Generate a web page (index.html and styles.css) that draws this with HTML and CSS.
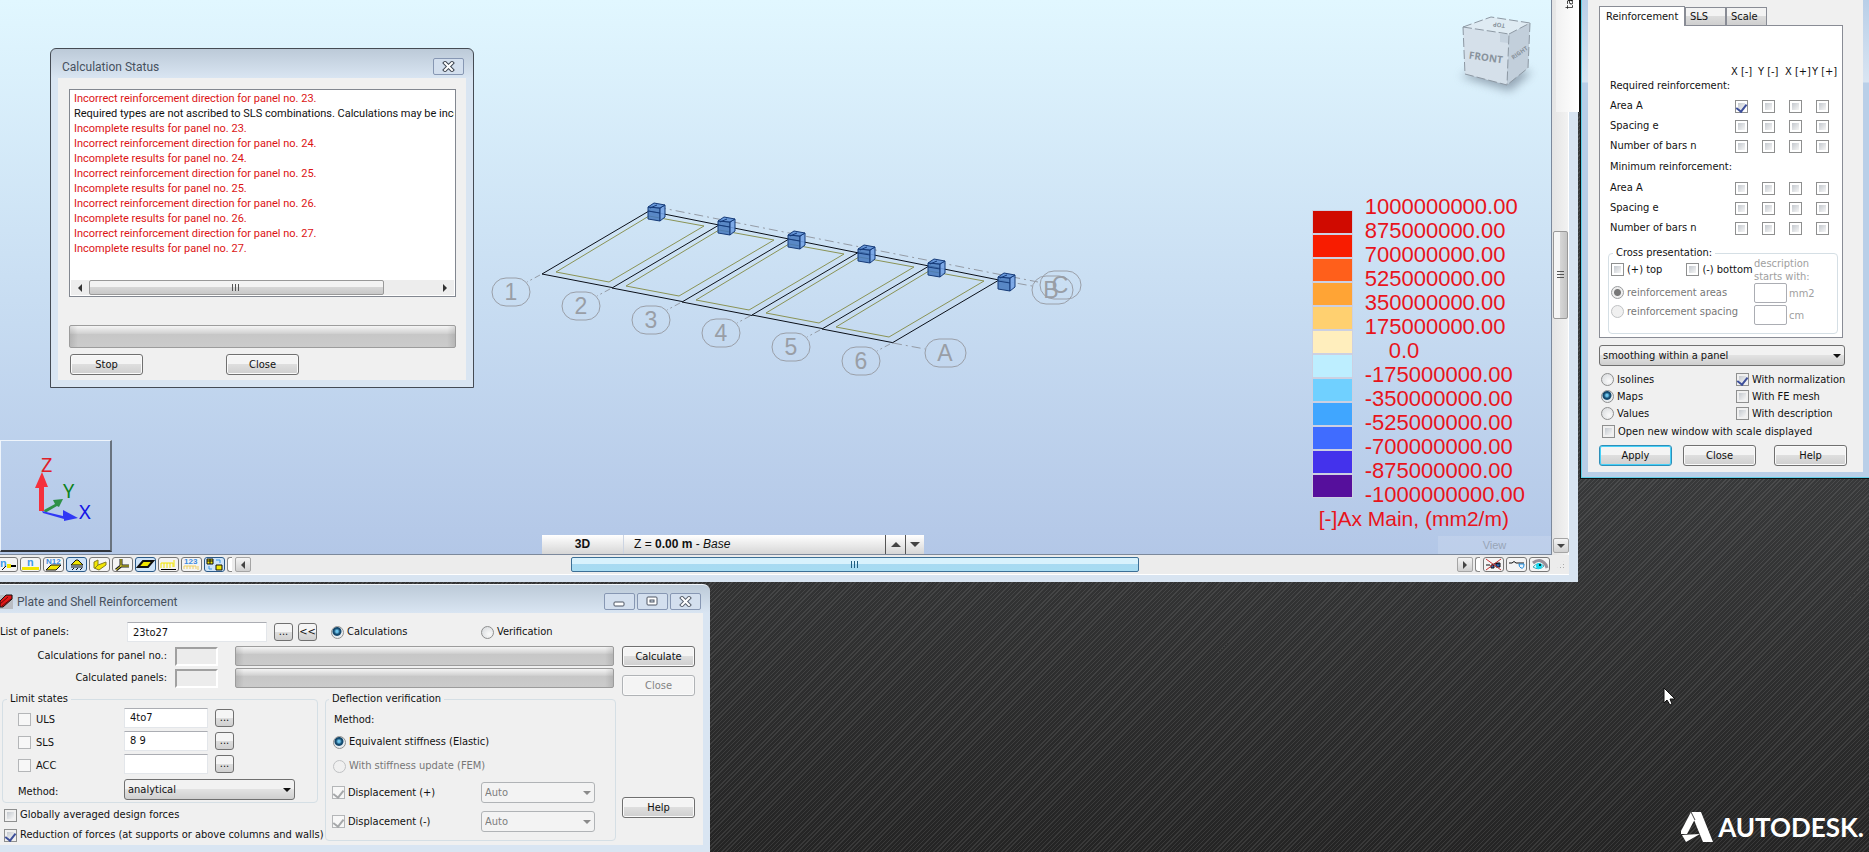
FILE: index.html
```html
<!DOCTYPE html>
<html lang="en">
<head>
<meta charset="utf-8">
<title>Plate and Shell Reinforcement</title>
<link rel="stylesheet" href="styles.css">
</head>
<body>
<main class="desktop">

<section class="viewer" aria-label="3D view">
  <div class="canvas">
    <svg class="scene" width="620" height="220" viewBox="480 180 620 220" aria-label="Model">
      <defs>
        <g id="panel">
          <path d="M542 274L649 211L719 225" fill="none" stroke="#0a0f18"/>
          <path d="M542 274L612 287.500" fill="none" stroke="#0a0f18"/>
          <path d="M556 272L649 216L704 226L609 282Z" fill="none" stroke="#8a9355"/>
          <path d="M540 275L527 282" stroke="#949ba5" stroke-dasharray="6 3 2 3"/>
        </g>
        <g id="cube" stroke="#153a78" stroke-width="1">
          <path d="M648 207L660 208L660 221L648 219Z" fill="#4478bd" fill-opacity=".85"/>
          <path d="M660 208L665 205L665 217L660 221Z" fill="#74a3e6" fill-opacity=".9"/>
          <path d="M648 207L654 203L665 205L660 208Z" fill="#5c8fd6" fill-opacity=".9"/>
          <path d="M648 211L660 213M650 208L657 205" fill="none"/>
        </g>
      </defs>
      <path d="M657 207L1038 282M999 280L1032 286M893 343L925 349" stroke="#949ba5" stroke-dasharray="9 4 2 4" fill="none"/>
      <use href="#panel"/><use href="#panel" x="70" y="14"/><use href="#panel" x="140" y="28"/><use href="#panel" x="210" y="41"/><use href="#panel" x="280" y="55"/>
      <path d="M892 343L999 280" stroke="#0a0f18"/>
      <path d="M890 344L877 351" stroke="#949ba5" stroke-dasharray="6 3 2 3"/>
      <use href="#cube"/><use href="#cube" x="70" y="14"/><use href="#cube" x="140" y="28"/><use href="#cube" x="210" y="42"/><use href="#cube" x="280" y="56"/><use href="#cube" x="350" y="70"/>
      <g fill="none" stroke="#9a9fa8">
        <rect x="492" y="278" width="38" height="28" rx="14"/><rect x="562" y="292" width="38" height="28" rx="14"/><rect x="632" y="306" width="38" height="28" rx="14"/><rect x="702" y="319" width="38" height="28" rx="14"/><rect x="772" y="333" width="38" height="28" rx="14"/><rect x="842" y="347" width="38" height="28" rx="14"/>
        <rect x="925" y="339" width="41" height="28" rx="14"/><rect x="1032" y="276" width="41" height="28" rx="14"/><rect x="1040" y="271" width="41" height="28" rx="14"/>
      </g>
      <g class="axis-name">
        <text x="511" y="300">1</text><text x="581" y="314">2</text><text x="651" y="328">3</text><text x="721" y="341">4</text><text x="791" y="355">5</text><text x="861" y="369">6</text>
        <text x="945" y="361">A</text><text x="1051" y="298">B</text><text x="1060" y="293">C</text>
      </g>
    </svg>

    <svg class="viewcube" width="90" height="90" viewBox="1450 10 90 90" aria-label="View cube">
      <defs><filter id="soft" x="-30%" y="-80%" width="160%" height="260%"><feGaussianBlur stdDeviation="5"/></filter></defs>
      <path d="M1460 76L1490 66L1532 72L1510 91Z" fill="#6f7f90" opacity=".65" filter="url(#soft)"/>
      <path d="M1463 27L1509 34L1507 85L1465 74Z" fill="#d5e0ea"/>
      <path d="M1509 34L1530 23L1528 68L1507 85Z" fill="#c2cfdb"/>
      <path d="M1463 27L1491 17L1530 23L1509 34Z" fill="#dfebf3"/>
      <path d="M1500 34h8v9l-8-1z" fill="#c6d3df"/>
      <path d="M1463 27L1509 34L1507 85L1465 74ZM1463 27L1491 17L1530 23L1509 34M1530 23L1528 68L1507 85" fill="none" stroke="#8d98a3" stroke-dasharray="9 3"/>
      <text class="cube-front" x="1486" y="61" transform="rotate(8 1486 57)">FRONT</text>
      <text class="cube-side" x="1519" y="55" transform="rotate(-35 1519 52)">RIGHT</text>
      <text class="cube-top" x="1499" y="27" transform="rotate(188 1499 25)">TOP</text>
    </svg>

    <div class="legend">
      <ol class="swatches">
        <li class="c1"></li><li class="c2"></li><li class="c3"></li><li class="c4"></li><li class="c5"></li><li class="c6"></li><li class="c7"></li><li class="c8"></li><li class="c9"></li><li class="c10"></li><li class="c11"></li><li class="c12"></li>
      </ol>
      <ol class="values">
        <li>1000000000.00</li><li>875000000.00</li><li>700000000.00</li><li>525000000.00</li><li>350000000.00</li><li>175000000.00</li><li class="zero">0.0</li><li>-175000000.00</li><li>-350000000.00</li><li>-525000000.00</li><li>-700000000.00</li><li>-875000000.00</li><li>-1000000000.00</li>
      </ol>
      <p class="caption">[-]Ax Main, (mm2/m)</p>
    </div>

    <div class="axes">
      <svg width="109" height="109" viewBox="0 0 109 109" aria-label="Axes">
        <path d="M43 69L54 63L52 59L62 58L58 66L56 65L44 72Z" fill="#2f9148"/>
        <path d="M41 70L62 75L62 69L77 77L63 80L63 78L42 72Z" fill="#3038f5"/>
        <path d="M38 70V47H34L41 31L47 46H43V70Z" fill="#f5303c"/>
        <g class="axes-name"><text x="40" y="31" fill="#e02028">Z</text><text x="62" y="57" fill="#0c8220">Y</text><text x="78" y="78" fill="#1414e6">X</text></g>
      </svg>
    </div>

    <div class="level">
      <span class="mode">3D</span>
      <span class="height">Z = <b>0.00 m</b> - <i>Base</i></span>
      <button class="step up" aria-label="Level up"></button>
      <button class="step down" aria-label="Level down"></button>
    </div>
    <span class="view-tag">View</span>
  </div>

  <div class="vscroll"><span class="vthumb"></span><button class="arrow adown" aria-label="Scroll down"></button></div>

  <div class="statusbar">
    <div class="tools">
      <button aria-label="Node numbers"><svg width="19" height="13"><text x="2" y="9" class="tn">n</text><path d="M4 12L8 8" stroke="#111"/><path d="M9 6h4v4h-4z" fill="#f2e600"/><path d="M13 7h5v2h-5z"/></svg></button>
      <button aria-label="Bar numbers"><svg width="19" height="13"><text x="6" y="8" class="tn">n</text><path d="M1 9h17v3H1z" fill="#f2e600"/></svg></button>
      <button aria-label="Panel numbers"><svg width="19" height="13"><text x="2" y="6" class="ts">N12</text><path d="M2 12L7 7H17L12 12Z" fill="#f2e600" stroke="#111"/></svg></button>
      <button class="on" aria-label="Supports"><svg width="19" height="13"><path d="M4 7L9 2H11L16 7Z" fill="#f2e600" stroke="#111"/><path d="M4 9h12M5 12l2-2M9 12l2-2M13 12l2-2" stroke="#111"/></svg></button>
      <button aria-label="Sections"><svg width="19" height="13"><path d="M4 4L8 2V7L16 4V7L9 12L4 10Z" fill="#f2e600" stroke="#847c20"/><path d="M8 7L5 10" stroke="#847c20"/></svg></button>
      <button aria-label="Local axes"><svg width="19" height="13"><path d="M8 1V7M8 8H16M8 8L3 12" stroke="#222" stroke-width="3" fill="none"/><path d="M8 1V8H16M8 8L3 12" stroke="#e8dc20" fill="none"/></svg></button>
      <button class="on" aria-label="Panels"><svg width="19" height="13"><path d="M2 9L7 3H17L12 9Z" fill="#f2e600" stroke="#111" stroke-width="2"/></svg></button>
      <button aria-label="Loads"><svg width="19" height="13"><path d="M2 10V5H14V9M5 5v5M8 5v5M11 5v5M15 2v7" stroke="#f2e600" stroke-width="1" fill="none"/><path d="M2 11h15v1H2z"/></svg></button>
      <button aria-label="Load values"><svg width="19" height="13"><text x="2" y="6" class="ts">123</text><path d="M2 11V8H14V11M5 8v3M8 8v3M11 8v3M16 8v4" stroke="#f0d060" fill="none"/></svg></button>
      <button class="on" aria-label="Attributes"><svg width="19" height="13"><path d="M2 1h6v5H2zM11 7h6v5h-6z" fill="#f2e600" stroke="#111"/><path d="M2 3h6M5 1v5" stroke="#111"/><path d="M11 2h4v3M7 11H4V8" stroke="#3d9be8" fill="none"/></svg></button>
    </div>
    <span class="split"></span>
    <button class="arrow aleft" aria-label="Scroll left"></button>
    <div class="track"><span class="thumb"></span></div>
    <button class="arrow aright" aria-label="Scroll right"></button>
    <span class="split"></span>
    <div class="tools">
      <button aria-label="Hide"><svg width="19" height="13"><path d="M2 7h4M8 7q3-3 7-1M7 7h3v3H7zM12 5h4v4h-4z" stroke="#111" fill="#3366c0"/><path d="M2 1L17 12M17 1L2 12" stroke="#c83030"/></svg></button>
      <button aria-label="Glasses"><svg width="19" height="13"><path d="M2 5h3q2-3 4 0h8" stroke="#111" fill="none"/><path d="M12 6h5q0 5-3 4-2-1-2-4z" fill="#e6f4ff" stroke="#1c88d8"/></svg></button>
      <button aria-label="Display"><svg width="19" height="13"><path d="M3 5q7-6 13 2l1 3" stroke="#98909a" stroke-width="3" fill="none"/><path d="M3 9q5-6 11-1-5 5-11 1z" fill="#e0fbff" stroke="#38a8b8"/><circle cx="9" cy="8" r="3" fill="#18d8ee"/><circle cx="10" cy="7" r="1"/></svg></button>
    </div>
    <span class="grip"></span>
  </div>
</section>

<aside class="sidetab"><span>ta</span></aside>

<section class="window status" aria-label="Calculation Status">
  <header class="titlebar"><h2>Calculation Status</h2>
    <button class="cap" aria-label="Close window"><svg width="13" height="11"><path d="M3 2L10 9M10 2L3 9" stroke="#3f4652" stroke-width="4" stroke-linecap="square"/><path d="M3 2L10 9M10 2L3 9" stroke="#fff" stroke-width="2" stroke-linecap="square"/></svg></button></header>
  <div class="client">
    <div class="listbox">
      <ul>
        <li>Incorrect reinforcement direction for panel no. 23.</li>
        <li class="note">Required types are not ascribed to SLS combinations. Calculations may be incomplete.</li>
        <li>Incomplete results for panel no. 23.</li>
        <li>Incorrect reinforcement direction for panel no. 24.</li>
        <li>Incomplete results for panel no. 24.</li>
        <li>Incorrect reinforcement direction for panel no. 25.</li>
        <li>Incomplete results for panel no. 25.</li>
        <li>Incorrect reinforcement direction for panel no. 26.</li>
        <li>Incomplete results for panel no. 26.</li>
        <li>Incorrect reinforcement direction for panel no. 27.</li>
        <li>Incomplete results for panel no. 27.</li>
      </ul>
      <div class="hscroll"><button class="flat fleft" aria-label="Scroll left"></button><div class="htrack"><span class="hthumb"></span></div><button class="flat fright" aria-label="Scroll right"></button></div>
    </div>
    <div class="progress tall" role="progressbar" aria-label="Progress"></div>
    <div class="actions"><button class="btn">Stop</button><button class="btn">Close</button></div>
  </div>
</section>

<section class="window results" aria-label="Reinforcement results">
  <div class="client">
    <div class="tabs" role="tablist"><button class="tab current" role="tab">Reinforcement</button><button class="tab" role="tab">SLS</button><button class="tab" role="tab">Scale</button></div>
    <div class="sheet">
      <table class="grid">
        <thead>
          <tr><td></td><th>X [-]</th><th>Y [-]</th><th>X [+]</th><th>Y [+]</th></tr>
          <tr><th colspan="5">Required reinforcement:</th></tr>
        </thead>
        <tbody>
          <tr><th>Area A</th><td><input type="checkbox" checked aria-label="Area A X-"></td><td><input type="checkbox" aria-label="Area A Y-"></td><td><input type="checkbox" aria-label="Area A X+"></td><td><input type="checkbox" aria-label="Area A Y+"></td></tr>
          <tr><th>Spacing e</th><td><input type="checkbox" aria-label="Spacing X-"></td><td><input type="checkbox" aria-label="Spacing Y-"></td><td><input type="checkbox" aria-label="Spacing X+"></td><td><input type="checkbox" aria-label="Spacing Y+"></td></tr>
          <tr><th>Number of bars n</th><td><input type="checkbox" aria-label="Bars X-"></td><td><input type="checkbox" aria-label="Bars Y-"></td><td><input type="checkbox" aria-label="Bars X+"></td><td><input type="checkbox" aria-label="Bars Y+"></td></tr>
          <tr class="minimum"><th colspan="5">Minimum reinforcement:</th></tr>
          <tr><th>Area A</th><td><input type="checkbox" aria-label="Min area X-"></td><td><input type="checkbox" aria-label="Min area Y-"></td><td><input type="checkbox" aria-label="Min area X+"></td><td><input type="checkbox" aria-label="Min area Y+"></td></tr>
          <tr><th>Spacing e</th><td><input type="checkbox" aria-label="Min spacing X-"></td><td><input type="checkbox" aria-label="Min spacing Y-"></td><td><input type="checkbox" aria-label="Min spacing X+"></td><td><input type="checkbox" aria-label="Min spacing Y+"></td></tr>
          <tr><th>Number of bars n</th><td><input type="checkbox" aria-label="Min bars X-"></td><td><input type="checkbox" aria-label="Min bars Y-"></td><td><input type="checkbox" aria-label="Min bars X+"></td><td><input type="checkbox" aria-label="Min bars Y+"></td></tr>
        </tbody>
      </table>
      <fieldset class="cross">
        <legend>Cross presentation:</legend>
        <div class="cross-left">
          <div class="pair"><label><input type="checkbox">(+) top</label><label><input type="checkbox">(-) bottom</label></div>
          <label class="dim"><input type="radio" name="cross" checked disabled>reinforcement areas</label>
          <label class="dim"><input type="radio" name="cross" disabled>reinforcement spacing</label>
        </div>
        <div class="cross-right">
          <p>description<br>starts with:</p>
          <label><input type="text" disabled>mm2</label>
          <label><input type="text" disabled>cm</label>
        </div>
      </fieldset>
    </div>
    <div class="select wide"><select aria-label="Smoothing"><option>smoothing within a panel</option></select></div>
    <div class="options">
      <label><input type="radio" name="mode">Isolines</label><label><input type="checkbox" checked>With normalization</label>
      <label><input type="radio" name="mode" checked>Maps</label><label><input type="checkbox">With FE mesh</label>
      <label><input type="radio" name="mode">Values</label><label><input type="checkbox">With description</label>
      <label class="span"><input type="checkbox">Open new window with scale displayed</label>
    </div>
    <div class="actions"><button class="btn primary">Apply</button><button class="btn">Close</button><button class="btn">Help</button></div>
  </div>
</section>

<section class="window plate" aria-label="Plate and Shell Reinforcement">
  <header class="titlebar">
    <svg class="appicon" width="13" height="16"><path d="M0 1h13v14H0z" fill="#b8bcc2"/><path d="M0 7L6 1H12V5L3 13H0Z" fill="#e01818" stroke="#111"/><path d="M0 10L8 3M2 12L11 5" stroke="#6d0808"/></svg>
    <h2>Plate and Shell Reinforcement</h2>
    <button class="cap" aria-label="Minimize"><svg width="13" height="11"><rect x="1" y="6" width="10" height="4" rx="1" fill="#fff" stroke="#4d5562"/></svg></button>
    <button class="cap" aria-label="Maximize"><svg width="13" height="11"><rect x="1" y="1" width="10" height="8" rx="1" fill="#fff" stroke="#4d5562"/><rect x="4" y="4" width="4" height="2" fill="#dbe6f2" stroke="#4d5562"/></svg></button>
    <button class="cap" aria-label="Close window"><svg width="13" height="11"><path d="M3 2L10 9M10 2L3 9" stroke="#59616e" stroke-width="4" stroke-linecap="square"/><path d="M3 2L10 9M10 2L3 9" stroke="#fff" stroke-width="2" stroke-linecap="square"/></svg></button>
  </header>
  <div class="client">
    <div class="form">
      <div class="line">
        <label class="list-label" for="panels">List of panels:</label>
        <input id="panels" class="panels" type="text" value="23to27">
        <button class="mini">...</button><button class="mini tight">&lt;&lt;</button>
        <label class="kind"><input type="radio" name="kind" checked>Calculations</label>
        <label class="kind"><input type="radio" name="kind">Verification</label>
      </div>
      <div class="line"><label class="right" for="cur">Calculations for panel no.:</label><input id="cur" class="sunken" readonly><div class="progress" role="progressbar" aria-label="Current panel"></div></div>
      <div class="line"><label class="right" for="done">Calculated panels:</label><input id="done" class="sunken" readonly><div class="progress" role="progressbar" aria-label="All panels"></div></div>
      <div class="groups">
        <div class="col">
          <fieldset class="limits">
            <legend>Limit states</legend>
            <div class="state"><label><input type="checkbox" disabled>ULS</label><input type="text" value="4to7" aria-label="ULS list"><button class="mini">...</button></div>
            <div class="state"><label><input type="checkbox" disabled>SLS</label><input type="text" value="8 9" aria-label="SLS list"><button class="mini">...</button></div>
            <div class="state"><label><input type="checkbox" disabled>ACC</label><input type="text" value="" aria-label="ACC list"><button class="mini">...</button></div>
            <div class="state method"><label for="method">Method:</label><div class="select"><select id="method"><option>analytical</option></select></div></div>
          </fieldset>
          <label class="opt"><input type="checkbox">Globally averaged design forces</label>
          <label class="opt"><input type="checkbox" checked>Reduction of forces (at supports or above columns and walls)</label>
        </div>
        <fieldset class="deflection">
          <legend>Deflection verification</legend>
          <p>Method:</p>
          <label class="way"><input type="radio" name="way" checked>Equivalent stiffness (Elastic)</label>
          <label class="way dim"><input type="radio" name="way" disabled>With stiffness update (FEM)</label>
          <div class="disp"><label><input type="checkbox" checked disabled>Displacement (+)</label><div class="select off"><select disabled aria-label="Displacement plus"><option>Auto</option></select></div></div>
          <div class="disp"><label><input type="checkbox" checked disabled>Displacement (-)</label><div class="select off"><select disabled aria-label="Displacement minus"><option>Auto</option></select></div></div>
        </fieldset>
      </div>
    </div>
    <div class="side"><button class="btn">Calculate</button><button class="btn" disabled>Close</button><button class="btn help">Help</button></div>
  </div>
</section>

<div class="brand">
  <svg width="32" height="32" viewBox="0 0 32 32" aria-hidden="true"><path d="M10 1H20L32 31H22L13 9Z" fill="#fff"/><path d="M10 1L14 8L6 23H0V20Z" fill="#fff"/><path d="M10 1L14 9" stroke="#444"/><path d="M1 24L19 23L5 31Z" fill="#fff"/></svg>
  <span>AUTODESK.</span>
</div>
<svg class="cursor" width="13" height="20" viewBox="0 0 13 20" aria-hidden="true"><path d="M1 1V16L4 13L7 18L9 17L7 12H12Z" fill="#fff" stroke="#111"/></svg>
</main>
</body>
</html>
```
FILE: styles.css
```css
* { box-sizing: border-box; }
body { margin: 0; font: 11px/14px "DejaVu Sans Condensed", "DejaVu Sans", sans-serif; color: #111; }
h2, p, ul, ol, fieldset { margin: 0; padding: 0; border: 0; min-width: 0; list-style: none; font-weight: normal; }
button, input, select { font: inherit; color: inherit; margin: 0; padding: 0; }

.desktop {
  position: relative; min-height: 100vh; overflow: hidden;
  background: repeating-linear-gradient(135deg, #0000 0 2px, #ffffff18 2px 3px), linear-gradient(#38393a 56%, #242424);
}

/* ---- 3D viewer window ---- */
.viewer {
  position: absolute; left: 0; top: 0; right: 291px;
  display: grid; grid-template-columns: 1fr 17px; grid-template-rows: auto 20px;
  border: solid #d8e4f1; border-width: 0 9px 7px 0; background: #ececec;
}
.canvas { position: relative; min-height: 555px; border: solid #7c899c; border-width: 0 1px 1px 0; background: linear-gradient(#e1f7ff, #b3c7e7); }
.scene { position: absolute; left: 480px; top: 180px; overflow: visible; }
.axis-name { font: 23px "Liberation Sans", sans-serif; fill: #999ea6; text-anchor: middle; }
.viewcube { position: absolute; right: 11px; top: 10px; }
.cube-front, .cube-side, .cube-top { font-family: "Open Sans", sans-serif; font-weight: bold; text-anchor: middle; fill: #89939d; }
.cube-front { font-size: 10px; }
.cube-side { font-size: 6px; }
.cube-top { font-size: 6px; }

.legend { position: absolute; right: 26px; top: 195px; display: grid; grid-template-columns: 41px auto; column-gap: 12px; font: 22px/24px "Liberation Sans", sans-serif; color: #e8141c; }
.swatches { padding-top: 15px; }
.swatches li { height: 24px; border: 1px solid #ccd0e2; }
.c1 { background: #d00a00; } .c2 { background: #f81c00; } .c3 { background: #ff5f1b; } .c4 { background: #ffa435; }
.c5 { background: #ffd070; } .c6 { background: #ffeebd; } .c7 { background: #bdeeff; } .c8 { background: #70d0ff; }
.c9 { background: #40a6ff; } .c10 { background: #406cff; } .c11 { background: #4432ec; } .c12 { background: #560f9c; }
.zero { padding-left: 24px; }
.caption { grid-column: 1 / -1; padding-left: 7px; font-size: 21px; }

.axes { position: absolute; left: 0; bottom: 2px; border: 1px solid #eef4fb; border-right: 2px solid #69737f; border-bottom: 2px solid #30343a; display: flex; }
.axes-name { font: 20px "Noto Sans", sans-serif; }

.level { position: absolute; left: 542px; bottom: 0; width: 382px; display: grid; grid-template-columns: 82px 1fr 20px 19px; line-height: 19px; font-family: "Liberation Sans", sans-serif; font-size: 12px; background: linear-gradient(#fff, #d6d6d6); }
.mode { font-weight: bold; text-align: center; border-right: 1px solid #ccd4e2; }
.height { padding-left: 10px; }
.step { border: 0; border-left: 1px solid #555; background: none; display: grid; place-items: center; }
.step::before, .arrow::before, .flat::before { content: ""; border: 4px solid #0000; }
.step.up::before { border-width: 0 5px 5px; border-bottom-color: #444; }
.step.down::before { border-width: 5px 5px 0; border-top-color: #444; }
.view-tag { position: absolute; right: 0; bottom: 0; width: 113px; text-align: center; font: 11px/18px "Liberation Sans", sans-serif; color: #98a5b8; background: #ffffff24; }

.arrow { width: 16px; height: 15px; border: 1px solid #a5a5a5; border-radius: 2px; background: linear-gradient(#f4f4f4, #d0d0d0); display: grid; place-items: center; }
.adown::before { border-width: 4px 4px 0; border-top-color: #444; }
.aleft::before { border-width: 4px 4px 4px 0; border-right-color: #444; }
.aright::before { border-width: 4px 0 4px 4px; border-left-color: #444; }
.vscroll { display: flex; flex-direction: column; justify-content: space-between; padding: 231px 0 2px 1px; background: linear-gradient(90deg, #e4e4e4, #f2f2f2); border-right: 1px solid #fff; }
.vthumb { height: 88px; width: 15px; border: 1px solid #999; border-radius: 2px; background: repeating-linear-gradient(#555 0 1px, #0000 1px 3px) center / 7px 9px no-repeat, linear-gradient(90deg, #f5f5f5 50%, #d5d5d5 50%, #c4c4c4); }
.statusbar { grid-column: 1 / -1; display: flex; align-items: center; gap: 2px; padding-right: 3px; border-bottom: 1px solid #fff; }
.tools { display: flex; gap: 2px; }
.tools:first-child { margin-left: -3px; }
.tools button { width: 21px; height: 15px; border: 1px solid #777; border-radius: 3px; background: #f4f4f4; overflow: hidden; display: flex; }
.tools .on { border-color: #2c5a88; background: #cfe4f8; }
.tn { font: bold 11px "Liberation Mono", monospace; fill: #3d9be8; }
.ts { font: bold 8px "Liberation Sans", sans-serif; fill: #3d8be0; }
.split { width: 5px; height: 15px; margin-right: 1px; border: 1px solid #888; border-right: 0; border-radius: 3px 0 0 3px; background: #fff; }
.track { flex: 1; height: 15px; padding-left: 318px; padding-right: 316px; display: flex; }
.thumb { flex: 1; border: 1px solid #3c6f96; border-radius: 2px; background: repeating-linear-gradient(90deg, #1f5e80 0 1px, #0000 1px 3px) center / 9px 7px no-repeat, linear-gradient(#d8f2fd 45%, #a8daf2 45%, #a6dcf2); }
.grip { width: 10px; height: 10px; margin-left: 4px; background: radial-gradient(#aaa 1px, #0000 1px) 0 0 / 3px 3px; clip-path: polygon(100% 0, 100% 100%, 0 100%); }

.sidetab { position: absolute; right: 289px; top: 0; width: 24px; height: 112px; padding-left: 7px; border-right: 1px solid #111; background: linear-gradient(90deg, #f1f1f1, #fff); }
.sidetab span { writing-mode: vertical-rl; transform: rotate(180deg); display: block; height: 9px; overflow: hidden; }

/* ---- windows ---- */
.window { position: absolute; background: #d9e5f2; }
.window .client { background: #f0f0f0; }
.titlebar { display: flex; align-items: center; gap: 2px; }
.titlebar h2 { flex: 1; font: 12px/18px Roboto, sans-serif; color: #47515e; }
.cap { width: 31px; height: 17px; border: 1px solid #8797b3; border-radius: 2px; background: #d3dfee; display: grid; place-items: center; }

.btn { width: 73px; height: 21px; border: 1px solid #707070; border-radius: 3px; background: linear-gradient(#f4f4f4 45%, #dedede 50%, #cfcfcf); box-shadow: inset 0 0 0 1px #fafafa; }
.btn:disabled { border-color: #b0b3b6; color: #838383; background: #f4f4f4; }
.btn.primary { border-color: #2f8fb8; box-shadow: inset 0 0 0 1px #46d0f8; }
.progress { flex: 1; height: 20px; border: 1px solid #9c9c9c; border-radius: 2px; background: linear-gradient(90deg, #0000001a, #0000 8px calc(100% - 8px), #0000001a), linear-gradient(#f5f5f5, #d2d2d2 35%, #c7c7c7 40%, #cbcbcb); }

input[type=checkbox], input[type=radio] { appearance: none; flex: none; width: 13px; height: 13px; border: 1px solid #8e8f8f; background: linear-gradient(135deg, #c4c9cf, #f6f6f6) content-box #f4f4f4; padding: 2px; display: inline-grid; place-items: center; }
input[type=checkbox]:checked::after { content: ""; width: 5px; height: 8px; border: solid #3d4f9a; border-width: 0 2px 2px 0; rotate: 38deg; translate: 0 -1px; }
input[type=checkbox]:disabled { border-color: #b4b6b8; background: #f7f7f7; }
input[type=checkbox]:disabled::after { border-color: #a6a8aa; }
input[type=radio] { border-radius: 50%; background: radial-gradient(circle at 65% 65%, #fafafa, #d4d7da); }
input[type=radio]:checked { background: radial-gradient(circle at 45% 40%, #6fc7ee 0 1px, #14496e 3px 4px, #e8ecef 5px); }
input[type=radio]:disabled { border-color: #c0c2c4; background: #f0f0f0; }
input[type=radio]:disabled:checked { background: radial-gradient(circle, #777 0 3px, #eee 4px); border-color: #9a9c9e; }
input[type=text] { border: 1px solid #e3e6ea; border-top-color: #abadb3; background: #fff; }
label { display: flex; align-items: center; white-space: nowrap; }
.dim { color: #777; }
.select { position: relative; display: flex; }
.select select { appearance: none; width: 100%; height: 21px; padding-left: 3px; border: 1px solid #707070; border-radius: 3px; background: linear-gradient(#f2f2f2 45%, #e2e2e2 50%, #cfcfcf); }
.select::after { content: ""; position: absolute; right: 4px; top: 9px; border: solid #0000; border-width: 4px 4px 0; border-top-color: #111; }
.select.off select { border-color: #b0b3b6; background: #f3f3f3; color: #7d7d7d; opacity: 1; }
.select.off::after { border-top-color: #8a8a8a; }

/* calculation status */
.status { left: 50px; top: 48px; width: 424px; padding: 0 7px 7px; border: 1px solid #454b54; border-radius: 6px 6px 0 0; background: linear-gradient(#bccad8, #d9e5f2 29px); }
.status .titlebar { height: 29px; padding: 6px 2px 0 4px; }
.status .client { padding: 11px 10px 5px 11px; }
.listbox { height: 208px; border: 1px solid #828790; background: #fff; display: flex; flex-direction: column; justify-content: space-between; padding: 1px; }
.listbox ul { overflow: hidden; padding-left: 3px; font: 11px/15px Roboto, sans-serif; color: #dc1414; white-space: nowrap; }
.listbox .note { color: #111; }
.hscroll { display: flex; height: 15px; background: #ededed; }
.flat { width: 18px; border: 0; background: none; display: grid; place-items: center; }
.fleft::before { border-left-width: 0; border-right-color: #333; }
.fright::before { border-right-width: 0; border-left-color: #333; }
.htrack { flex: 1; display: flex; }
.hthumb { width: 85%; border: 1px solid #999; border-radius: 2px; background: repeating-linear-gradient(90deg, #555 0 1px, #0000 1px 3px) center / 8px 7px no-repeat, linear-gradient(#f3f3f3 45%, #d6d6d6 50%, #c8c8c8); }
.progress.tall { height: 23px; margin: 28px 0 6px; }
.status .actions { display: flex; gap: 83px; padding-left: 1px; }

/* reinforcement results */
.results { right: 0; top: 0; width: 289px; padding: 0 6px 6px 7px; border: solid #111; border-width: 0 0 1px 1px; box-shadow: inset 1px -1px #5fd0e8; background: linear-gradient(#b9cfe8 0, #d9e5f2 82px, #b9cfe8 83px); }
.results .client { padding: 5px 17px 6px 11px; }
.tabs { display: flex; align-items: flex-end; height: 20px; }
.tab { height: 18px; width: 41px; padding: 0 4px; text-align: left; border: 1px solid #898c95; border-bottom: 0; background: linear-gradient(#f3f3f3 50%, #dcdcdc 50%, #cfcfcf); }
.tab.current { height: 20px; width: 86px; padding: 0 6px; background: #fff; margin-bottom: -1px; position: relative; }
.sheet { border: 1px solid #898c95; background: #fff; padding: 38px 4px 3px 8px; width: 244px; }
.grid { border-collapse: collapse; table-layout: fixed; width: 231px; }
.grid td, .grid th { padding: 0; height: 20px; font-weight: normal; text-align: left; width: 27px; white-space: nowrap; }
.grid tbody th:first-child, .grid thead td { width: 123px; padding-left: 2px; }
.grid thead td, .grid thead th { height: 15px; }
.grid thead tr:last-child th { height: 17px; padding: 0 0 3px 2px; }
.grid .minimum th { height: 22px; }
.grid tbody td { padding-left: 4px; }
.grid td input { display: grid; }
.cross { display: flex; height: 88px; margin-top: 8px; border: 1px solid #d5dfe5; border-radius: 4px; padding: 0 2px; }
.cross legend { margin-left: 2px; padding: 0 3px; }
.cross-left { width: 143px; }
.cross-left label { gap: 3px; height: 19px; }
.cross .pair { display: flex; gap: 24px; margin-bottom: 4px; }
.cross-right { color: #a0a0a0; line-height: 13px; margin-top: -3px; }
.cross-right label { gap: 2px; margin-bottom: 2px; }
.cross-right input { width: 33px; height: 20px; border: 1px solid #abadb3; border-radius: 2px; }
.select.wide { margin: 7px 0 5px; width: 246px; }
.options { display: grid; grid-template-columns: 134px auto; gap: 0 1px; padding-left: 2px; }
.options label { gap: 3px; height: 17px; }
.options .span { grid-column: 1 / -1; padding-left: 1px; height: 19px; }
.results .actions { display: flex; gap: 11px; width: 248px; padding-top: 4px; }
.results .actions .btn:last-child { margin-left: auto; }

/* plate and shell reinforcement */
.plate { left: 0; top: 584px; width: 710px; padding: 0 7px 7px 0; border-top: 1px solid #f2f7fc; border-radius: 0 7px 0 0; background: linear-gradient(#bccad8, #d9e5f2 28px); }
.plate .titlebar { height: 28px; padding: 5px 2px 0 0; }
.appicon { margin-right: 2px; }
.plate .client { display: flex; justify-content: space-between; padding: 9px 8px 0 0; }
.form { width: 616px; }
.line { display: flex; align-items: center; height: 22px; padding-right: 2px; }
.line:first-child { height: 20px; margin-bottom: 3px; }
.list-label { width: 127px; }
.panels { width: 140px; height: 20px; }
.line .panels, .state input[type=text] { padding-left: 5px; }
.mini { width: 19px; height: 18px; margin-left: 7px; border: 1px solid #707070; border-radius: 3px; background: linear-gradient(#f5f5f5 50%, #dedede 50%, #d0d0d0); line-height: 12px; }
.mini.tight { margin-left: 5px; }
.kind { width: 150px; gap: 3px; margin-left: 14px; }
.kind + .kind { width: auto; margin-left: 0; }
.right { width: 175px; justify-content: flex-end; padding-right: 8px; }
.sunken { width: 43px; height: 19px; margin-right: 17px; border: 2px solid #a0a0a0; border-right-color: #fff; border-bottom-color: #fff; background: #ececec; }
.groups { display: flex; justify-content: space-between; padding: 3px 0 0 2px; }
.limits, .deflection { border: 1px solid #d5dfe5; border-radius: 4px; }
.limits legend { margin-left: 4px; padding: 0 3px; }
.deflection legend { margin-left: -3px; padding: 0 3px; }
.limits { width: 316px; height: 111px; margin-bottom: 2px; }
.state { display: flex; align-items: center; height: 23px; padding-left: 15px; }
.state label { width: 106px; gap: 5px; padding-top: 4px; }
.state input[type=text] { width: 84px; height: 20px; }
.method { padding-top: 3px; height: 26px; }
.method .select { width: 171px; }
.opt { gap: 3px; height: 20px; padding-left: 2px; }
.deflection { width: 291px; height: 149px; padding: 0 20px 0 6px; }
.deflection p { padding: 7px 0 0 2px; height: 24px; }
.way { height: 24px; gap: 3px; padding-left: 1px; }
.disp { display: flex; justify-content: space-between; height: 29px; align-items: center; }
.disp label { gap: 3px; }
.disp .select { width: 114px; }
.side { display: flex; flex-direction: column; gap: 8px; padding-top: 24px; }
.help { margin-top: 93px; }

.brand { position: absolute; right: 5px; bottom: 9px; display: flex; align-items: center; gap: 5px; color: #fff; font: bold 26px/32px Lato, sans-serif; }
.cursor { position: absolute; left: 1663px; top: 687px; }
```
